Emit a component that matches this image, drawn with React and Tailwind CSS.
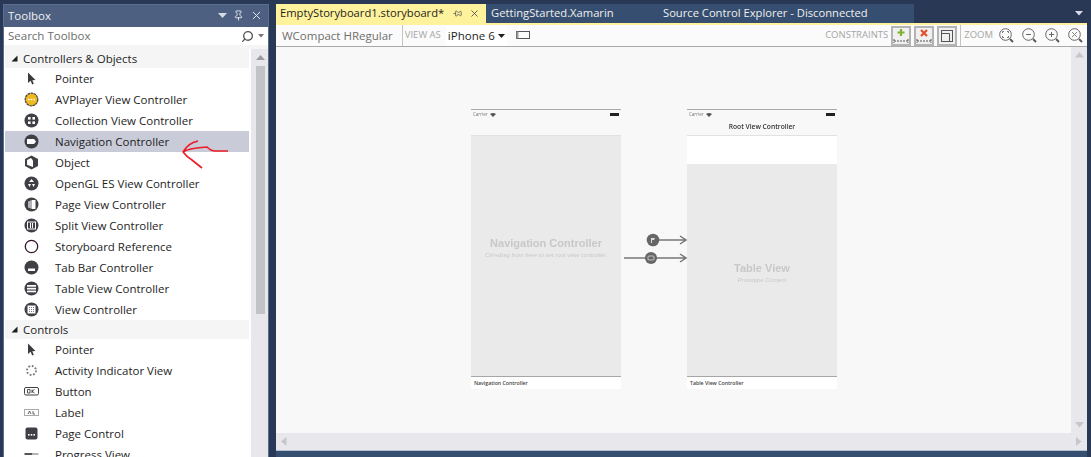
import React from 'react';
import { Pin, X, Search } from 'lucide-react';

// dark round badge with a small white glyph, most toolbox items use this
function Badge({ children, fill = '#3f3f46' }) {
    return (
        <svg width="15" height="15" viewBox="0 0 15 15">
            <circle cx="7.5" cy="7.5" r="7" fill={fill} />
            {children}
        </svg>
    );
}

function PointerIcon() {
    return (
        <svg width="15" height="15" viewBox="0 0 15 15">
            <path d="M4 1.5 L4 12 L6.6 9.8 L8.2 13.5 L9.8 12.8 L8.3 9.2 L11.5 9 Z" fill="#3a3a3f" />
        </svg>
    );
}

const icons = {
    pointer: <PointerIcon />,
    avplayer: (
        <svg width="15" height="15" viewBox="0 0 15 15">
            <circle cx="7.5" cy="7.5" r="6.3" fill="#f0b91f" stroke="#3f3f46" strokeWidth="1.2" strokeDasharray="2.5 0.6" />
            <rect x="4" y="6.8" width="1.6" height="1.4" fill="#fff" />
            <rect x="6.7" y="6.8" width="1.6" height="1.4" fill="#fff" />
            <rect x="9.4" y="6.8" width="1.6" height="1.4" fill="#fff" />
        </svg>
    ),
    collection: (
        <Badge>
            <rect x="4" y="4" width="2.6" height="2.6" fill="#fff" />
            <rect x="8.4" y="4" width="2.6" height="2.6" fill="#fff" />
            <rect x="4" y="8.4" width="2.6" height="2.6" fill="#fff" />
            <rect x="8.4" y="8.4" width="2.6" height="2.6" fill="#fff" />
        </Badge>
    ),
    navigation: (
        <Badge>
            <path d="M3 5 H10 L12 7.5 L10 10 H3 Z" fill="#fff" />
        </Badge>
    ),
    object: (
        <svg width="15" height="15" viewBox="0 0 15 15">
            <path d="M7.5 0.5 L14 4 V11 L7.5 14.5 L1 11 V4 Z" fill="#3f3f46" />
            <path d="M3 5 L7 3 L9 5.5 V12 L3 9.8 Z" fill="#fff" />
        </svg>
    ),
    opengl: (
        <Badge>
            <path d="M7.5 3 L10 6 H5 Z M4 8 L7 8 L5.5 11 Z M8 8 L11 8 L9.5 11 Z" fill="#fff" />
        </Badge>
    ),
    page: (
        <Badge>
            <path d="M4 4.5 L8 3 V12 L4 10.5 Z" fill="#b5b5b8" />
            <rect x="8" y="3" width="3.5" height="9" fill="#fff" />
        </Badge>
    ),
    split: (
        <Badge>
            <rect x="3.5" y="4" width="8" height="7" fill="none" stroke="#fff" strokeWidth="1" />
            <rect x="6" y="5" width="1" height="5" fill="#fff" />
            <rect x="8" y="5" width="1" height="5" fill="#fff" />
        </Badge>
    ),
    reference: (
        <svg width="15" height="15" viewBox="0 0 15 15">
            <circle cx="7.5" cy="7.5" r="6.2" fill="#fff" stroke="#35142c" strokeWidth="1.3" />
        </svg>
    ),
    tabbar: (
        <Badge>
            <rect x="4" y="8.5" width="7" height="2.5" fill="#fff" />
        </Badge>
    ),
    table: (
        <Badge>
            <rect x="3" y="4" width="9" height="1.7" fill="#fff" />
            <rect x="3" y="6.8" width="9" height="1.7" fill="#fff" />
            <rect x="3" y="9.6" width="9" height="1.7" fill="#fff" />
        </Badge>
    ),
    view: (
        <Badge>
            <rect x="3.5" y="3.5" width="8" height="8" fill="#fff" />
            <path d="M5 5.5 H10 M5 7.5 H10 M5 9.5 H10" stroke="#77777c" strokeDasharray="1 1" />
        </Badge>
    ),
    activity: (
        <svg width="15" height="15" viewBox="0 0 15 15">
            <circle cx="7.5" cy="7.5" r="4.5" fill="none" stroke="#77777c" strokeWidth="1.8" strokeDasharray="1.8 1.7" />
        </svg>
    ),
    button: (
        <svg width="15" height="15" viewBox="0 0 15 15">
            <rect x="0.5" y="3.5" width="14" height="7.5" rx="1.5" fill="#fff" stroke="#3f3f46" />
            <path d="M3.5 5.5 H6 V9 H3.5 Z M8 5.5 V9 M8 7.2 L10.5 5.5 M8 7.2 L10.5 9" fill="none" stroke="#3f3f46" strokeWidth="0.9" />
        </svg>
    ),
    label: (
        <svg width="15" height="15" viewBox="0 0 15 15">
            <rect x="0.5" y="4.5" width="14" height="6" fill="none" stroke="#55555a" strokeDasharray="1 1" />
            <path d="M4 9 L5.5 6 L7 9 M9 6 V9 H11" fill="none" stroke="#55555a" strokeWidth="0.9" />
        </svg>
    ),
    pagecontrol: (
        <svg width="15" height="15" viewBox="0 0 15 15">
            <rect x="1.5" y="1.5" width="12" height="12" rx="2" fill="#3f3f46" />
            <rect x="4" y="8" width="1.6" height="1.6" fill="#fff" />
            <rect x="6.7" y="8" width="1.6" height="1.6" fill="#fff" />
            <rect x="9.4" y="8" width="1.6" height="1.6" fill="#fff" />
        </svg>
    ),
    progress: (
        <svg width="15" height="15" viewBox="0 0 15 15">
            <rect x="0.5" y="6" width="8" height="2" fill="#55555a" />
            <rect x="8.5" y="6" width="6" height="2" fill="#b5b5b8" />
        </svg>
    ),
};

const controllers = [
    ['pointer', 'Pointer'],
    ['avplayer', 'AVPlayer View Controller'],
    ['collection', 'Collection View Controller'],
    ['navigation', 'Navigation Controller', true],
    ['object', 'Object'],
    ['opengl', 'OpenGL ES View Controller'],
    ['page', 'Page View Controller'],
    ['split', 'Split View Controller'],
    ['reference', 'Storyboard Reference'],
    ['tabbar', 'Tab Bar Controller'],
    ['table', 'Table View Controller'],
    ['view', 'View Controller'],
];

const controls = [
    ['pointer', 'Pointer'],
    ['activity', 'Activity Indicator View'],
    ['button', 'Button'],
    ['label', 'Label'],
    ['pagecontrol', 'Page Control'],
    ['progress', 'Progress View'],
];

function GroupHeader({ label }) {
    return (
        <div className="flex h-[19px] shrink-0 items-center bg-[#f5f5f5] pl-[6px] text-[#1e1e1e]">
            <svg width="7" height="7" viewBox="0 0 7 7" className="mr-[5px]">
                <path d="M6.5 0.5 V6.5 H0.5 Z" fill="#1e1e1e" />
            </svg>
            {label}
        </div>
    );
}

function ToolRow({ icon, label, selected }) {
    return (
        <div className={`flex h-[21px] shrink-0 items-center ${selected ? 'bg-[#c9cbd9]' : ''}`}>
            <div className="flex w-[50px] shrink-0 justify-end pr-[16px]">
                <span className="flex h-[15px] w-[15px]">{icons[icon]}</span>
            </div>
            <span className="whitespace-nowrap text-[#1e1e1e]">{label}</span>
        </div>
    );
}

function Toolbox() {
    return (
        <div className="flex h-[453px] w-[266px] shrink-0 flex-col overflow-hidden border border-[#5a6e90] border-b-0 bg-[#f5f5f5]">
            <div className="flex h-[22px] shrink-0 items-center justify-between bg-[#4d6082] pb-[1px] pl-[4px] pr-[5px] text-[#f0f0f0]">
                <span>Toolbox</span>
                <div className="flex items-center gap-[6px]">
                    <svg width="9" height="5" viewBox="0 0 9 5"><path d="M0 0 H9 L4.5 5 Z" fill="#d6dbe5" /></svg>
                    <Pin size={11} color="#e6e9ef" strokeWidth={2} />
                    <X size={13} color="#e6e9ef" strokeWidth={1.8} />
                </div>
            </div>
            <div className="flex h-[18px] shrink-0 items-center justify-between bg-white pl-[4px] pr-[4px] text-[#6d6d6d]">
                <span>Search Toolbox</span>
                <div className="flex items-center gap-[4px]">
                    <Search size={13} color="#555" strokeWidth={2.5} className="-scale-x-100" />
                    <svg width="6" height="4" viewBox="0 0 6 4"><path d="M0 0 H6 L3 3.5 Z" fill="#777" /></svg>
                </div>
            </div>
            <div className="h-[4px] shrink-0 bg-[#f5f5f5]" />
            <div className="flex min-h-0 flex-1 bg-white pl-[1px]">
                <div className="flex w-[244px] shrink-0 flex-col overflow-hidden">
                    <GroupHeader label="Controllers & Objects" />
                    {controllers.map(([icon, label, selected]) => (
                        <ToolRow key={label} icon={icon} label={label} selected={selected} />
                    ))}
                    <GroupHeader label="Controls" />
                    {controls.map(([icon, label], i) => (
                        <ToolRow key={i} icon={icon} label={label} />
                    ))}
                </div>
                <div className="ml-[2px] flex w-[17px] shrink-0 flex-col items-end bg-[#e8e8ec] pr-[3px]">
                    <svg width="9" height="17" viewBox="0 0 9 17" className="shrink-0">
                        <path d="M0 11 L4.5 6 L9 11 Z" fill="#9a9aa2" />
                    </svg>
                    <div className="h-[248px] w-[9px] shrink-0 bg-[#c2c3c9]" />
                </div>
            </div>
        </div>
    );
}

function Tab({ label, active, className = '' }) {
    return (
        <div className={`flex h-[19px] items-center whitespace-nowrap text-[11.2px] ${active ? 'bg-[#fff29d] text-[#1e1e1e]' : 'text-[#f0f0f0]'} ${className}`}>
            {label}
            {active && (
                <span className="ml-[9px] flex items-center gap-[7px]">
                    <Pin size={9} color="#555" className="rotate-90" />
                    <X size={11} color="#555" strokeWidth={2} />
                </span>
            )}
        </div>
    );
}

function ZoomIcon({ children }) {
    return (
        <svg width="17" height="17" viewBox="0 0 17 17">
            <circle cx="7.5" cy="7.5" r="5.8" fill="none" stroke="#666" strokeWidth="1" />
            <path d="M12 12 L15 15" stroke="#555" strokeWidth="1.8" />
            {children}
        </svg>
    );
}

function ConstraintButton({ children }) {
    return (
        <div className="flex h-[20px] w-[20px] items-center justify-center border-2 border-[#b4b4b4] bg-[#f0f0f0]">
            {children}
        </div>
    );
}

function Toolbar() {
    return (
        <div className="flex h-[22px] shrink-0 items-center border-b border-[#a9a9a9] bg-[#fbfbfb] pl-[6px] pr-[3px]">
            <span className="text-[#6f6f6f]">WCompact HRegular</span>
            <div className="ml-[9px] h-full w-px bg-[#c4c4c4]" />
            <span className="ml-[2px] text-[9.5px] text-[#a5a5a5]">VIEW AS</span>
            <div className="ml-[5px] flex h-full items-center gap-[3px] bg-white px-[2px] text-[#1e1e1e]">
                iPhone 6
                <svg width="7" height="4" viewBox="0 0 7 4"><path d="M0 0 H7 L3.5 4 Z" fill="#1e1e1e" /></svg>
            </div>
            <svg width="15" height="9" viewBox="0 0 15 9" className="ml-[9px]">
                <rect x="0.5" y="0.5" width="13" height="7" fill="none" stroke="#555" />
                <rect x="0.5" y="0.5" width="2" height="7" fill="#999" />
            </svg>
            <div className="flex-1" />
            <span className="text-[9.5px] text-[#a5a5a5]">CONSTRAINTS</span>
            <div className="ml-[3px] flex items-center gap-[3px]">
                <ConstraintButton>
                    <svg width="16" height="16" viewBox="0 0 16 16">
                        <path d="M8 1 V8 M4.5 4.5 H11.5" stroke="#7db32e" strokeWidth="2.2" />
                        <path d="M1 13 H15 M1 11 V15 M15 11 V15" stroke="#555" strokeDasharray="2 1" />
                    </svg>
                </ConstraintButton>
                <ConstraintButton>
                    <svg width="16" height="16" viewBox="0 0 16 16">
                        <path d="M5 2 L11 8 M11 2 L5 8" stroke="#e2502b" strokeWidth="2.2" />
                        <path d="M1 13 H15 M1 11 V15 M15 11 V15" stroke="#555" strokeDasharray="2 1" />
                    </svg>
                </ConstraintButton>
                <ConstraintButton>
                    <svg width="14" height="14" viewBox="0 0 14 14">
                        <rect x="1.5" y="1.5" width="11" height="11" fill="none" stroke="#555" />
                        <path d="M1.5 4.5 H9.5 V12.5" fill="none" stroke="#555" />
                    </svg>
                </ConstraintButton>
            </div>
            <div className="ml-[3px] h-full w-px bg-[#c4c4c4]" />
            <span className="ml-[3px] text-[9.5px] text-[#a5a5a5]">ZOOM</span>
            <div className="ml-[5px] flex items-center gap-[6px]">
                <ZoomIcon>
                    <path d="M4.5 6 V4.5 H6 M9 4.5 H10.5 V6 M10.5 9 V10.5 H9 M6 10.5 H4.5 V9" fill="none" stroke="#666" strokeWidth="0.9" />
                </ZoomIcon>
                <ZoomIcon>
                    <path d="M5 7.5 H10" stroke="#666" strokeWidth="1" />
                </ZoomIcon>
                <ZoomIcon>
                    <path d="M5 7.5 H10 M7.5 5 V10" stroke="#666" strokeWidth="1" />
                </ZoomIcon>
                <ZoomIcon>
                    <path d="M5 5 L10 10 M10 5 L5 10" stroke="#888" strokeWidth="1" />
                </ZoomIcon>
            </div>
        </div>
    );
}

function StatusBar() {
    return (
        <div className="flex h-[9px] items-center justify-between px-[2px] text-[4.5px] text-[#777] blur-[0.3px]">
            <span className="flex items-center gap-[2px]">
                Carrier
                <svg width="6" height="4" viewBox="0 0 6 4"><path d="M0 1 Q3 -1 6 1 L3 4 Z" fill="#555" /></svg>
            </span>
            <span className="h-[3px] w-[9px] bg-[#222]" />
        </div>
    );
}

function Phone({ title, footer, tableStrip, heading, sub, className }) {
    return (
        <div className={`absolute flex h-[280px] w-[150px] flex-col ${className}`}>
            <div className="flex h-[27px] shrink-0 flex-col border-t border-b border-t-[#a9a9a9] border-b-[#e2e2e2] bg-[#f8f8f8]">
                <StatusBar />
                {title && <div className="mt-[3px] text-center text-[6.7px] font-semibold leading-[9px] text-[#333] blur-[0.3px]">{title}</div>}
            </div>
            {tableStrip && <div className="h-[28px] shrink-0 bg-white" />}
            <div className="flex flex-1 flex-col items-center bg-[#eaeaea] text-center font-['Liberation_Sans',sans-serif] blur-[0.4px]">
                <div className={`font-bold leading-[13px] text-[#c8c8c8] text-[11px] ${tableStrip ? 'mt-[98px]' : 'mt-[101px]'}`}>{heading}</div>
                <div className="mt-[2px] whitespace-nowrap text-[6px] italic leading-[7px] text-[#c8c8c8]">{sub}</div>
            </div>
            <div className="flex h-[13px] shrink-0 items-center border-t border-[#a6a6a6] bg-white pl-[3px] pt-[1px] text-[5.2px] font-semibold text-[#444]">
                {footer}
            </div>
        </div>
    );
}

function Segues() {
    return (
        <svg width="66" height="40" viewBox="0 0 66 40" className="absolute left-[346px] top-[186px]">
            <path d="M32 7 H63 M58 3 L64 7 L58 11" fill="none" stroke="#777" strokeWidth="1.5" />
            <circle cx="31" cy="7" r="6.3" fill="#666" />
            <path d="M29 5 H33 L32 7 H30 V10 H29 Z" fill="#ddd" />
            <path d="M2 25 H63 M58 21 L64 25 L58 29" fill="none" stroke="#777" strokeWidth="1.5" />
            <circle cx="29" cy="25" r="6" fill="#666" />
            <rect x="26" y="23" width="6" height="4" rx="1" fill="none" stroke="#ddd" strokeWidth="0.8" />
        </svg>
    );
}

function Designer() {
    return (
        <div className="flex min-h-0 flex-1 flex-col">
            <div className="flex min-h-0 flex-1">
                <div className="relative flex-1 overflow-hidden bg-[#f8f8f8]">
                    <Phone
                        className="left-[195px] top-[62px]"
                        heading="Navigation Controller"
                        sub="Ctrl+drag from here to set root view controller."
                        footer="Navigation Controller"
                    />
                    <Phone
                        className="left-[411px] top-[62px]"
                        title="Root View Controller"
                        tableStrip
                        heading="Table View"
                        sub="Prototype Content"
                        footer="Table View Controller"
                    />
                    <Segues />
                </div>
                <div className="flex w-[16px] shrink-0 flex-col items-center justify-between bg-[#e8e8ec] py-[5px]">
                    <svg width="9" height="6" viewBox="0 0 9 6"><path d="M0 5.5 L4.5 0 L9 5.5 Z" fill="#c6c6cc" /></svg>
                    <svg width="9" height="6" viewBox="0 0 9 6"><path d="M0 0 L4.5 5.5 L9 0 Z" fill="#c6c6cc" /></svg>
                </div>
            </div>
            <div className="flex h-[17px] shrink-0 items-center justify-between bg-[#e8e8ec] px-[5px]">
                <svg width="6" height="9" viewBox="0 0 6 9"><path d="M5.5 0 L0 4.5 L5.5 9 Z" fill="#c6c6cc" /></svg>
                <svg width="6" height="9" viewBox="0 0 6 9"><path d="M0 0 L5.5 4.5 L0 9 Z" fill="#c6c6cc" /></svg>
            </div>
        </div>
    );
}

export default function App() {
    return (
        <div className="relative flex h-[457px] w-[1091px] overflow-hidden bg-[#293955] pl-[3px] pt-[4px] font-['Open_Sans',sans-serif] text-[11.5px]">
            <Toolbox />
            <div className="ml-[7px] flex min-w-0 flex-1 flex-col pr-[4px]">
                <div className="flex shrink-0 items-end">
                    <Tab active label="EmptyStoryboard1.storyboard*" className="w-[210px] pl-[4px]" />
                    <div className="flex flex-1 items-center bg-[#364e6f]">
                        <Tab label="GettingStarted.Xamarin" className="w-[177px] pl-[5px]" />
                        <Tab label="Source Control Explorer - Disconnected" />
                    </div>
                    <div className="flex h-[19px] w-[173px] items-center justify-end pr-[4px]">
                        <svg width="8" height="5" viewBox="0 0 8 5"><path d="M0 0 H8 L4 4.5 Z" fill="#d6dbe5" /></svg>
                    </div>
                </div>
                <div className="h-[2px] shrink-0 bg-[#fff29d]" />
                <Toolbar />
                <Designer />
                <div className="h-[7px] shrink-0 border-t border-[#b7c0d0] bg-[#364e6f]" />
            </div>
            {/* hand-drawn red arrow over the list */}
            <svg width="50" height="32" viewBox="0 0 50 32" className="absolute left-[181px] top-[139px]" fill="none">
                <path d="M17 2 Q7 4 2 13 Q8 9 26 8 Q30 12 34 12 H47 M2 13 Q6 18 11 21 L21 29" stroke="#ee1c25" strokeWidth="1.7" />
            </svg>
        </div>
    );
}
